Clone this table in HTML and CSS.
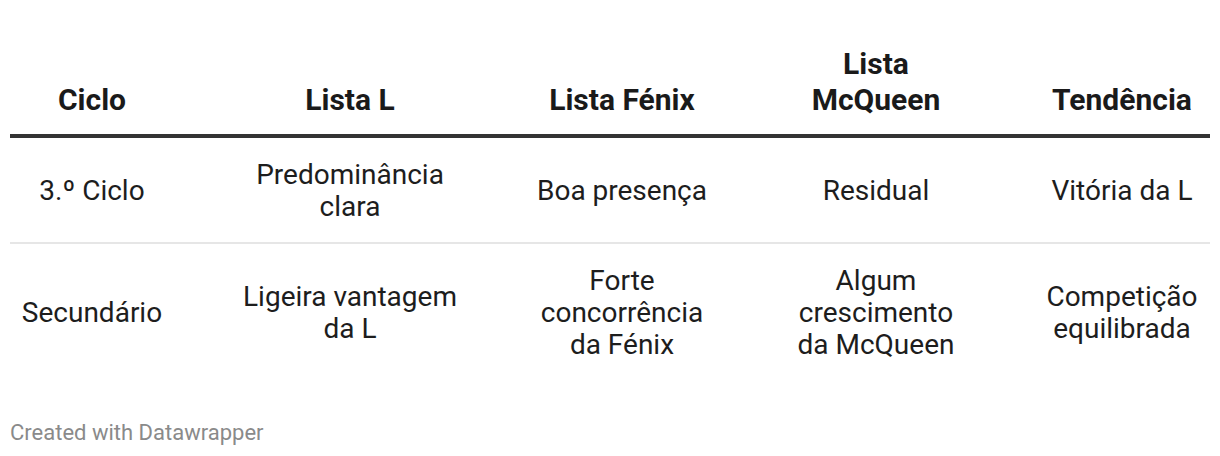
FILE: index.html
```html
<!DOCTYPE html>
<html>
<head>
<meta charset="utf-8">
<link rel="stylesheet" href="styles.css">
</head>
<body>
<div class="chart">
  <table class="dw-table">
    <thead>
      <tr>
        <th class="c1">Ciclo</th>
        <th class="c2">Lista L</th>
        <th class="c3">Lista Fénix</th>
        <th class="c4">Lista<br>McQueen</th>
        <th class="c5">Tendência</th>
      </tr>
    </thead>
    <tbody>
      <tr class="sep">
        <td>3.º Ciclo</td>
        <td>Predominância<br>clara</td>
        <td>Boa presença</td>
        <td>Residual</td>
        <td>Vitória da L</td>
      </tr>
      <tr>
        <td>Secundário</td>
        <td>Ligeira vantagem<br>da L</td>
        <td>Forte<br>concorrência<br>da Fénix</td>
        <td>Algum<br>crescimento<br>da McQueen</td>
        <td>Competição<br>equilibrada</td>
      </tr>
    </tbody>
  </table>
  <div class="footer">Created with Datawrapper</div>
</div>
</body>
</html>
```

FILE: styles.css
```css
html, body {
  margin: 0;
  padding: 0;
  background: #ffffff;
}
.chart {
  padding: 46px 10px 0 10px;
  font-family: Roboto, "Liberation Sans", sans-serif;
  color: #1d1d1d;
}
.dw-table {
  width: 100%;
  border-collapse: collapse;
  table-layout: fixed;
}
.dw-table th {
  font-size: 30px;
  font-weight: 700;
  line-height: 36px;
  vertical-align: bottom;
  text-align: center;
  padding: 0 0 16px 0;
  border-bottom: 4px solid #333333;
  color: #1a1a1a;
}
.dw-table td {
  font-size: 28px;
  font-weight: 400;
  line-height: 32px;
  text-align: center;
  vertical-align: middle;
  padding: 21px 0 19px 0;
}
.dw-table tr.sep td {
  border-bottom: 2px solid #e6e6e6;
}
.c1 { width: 164px; }
.c2 { width: 352px; }
.c3 { width: 192px; }
.c4 { width: 316px; }
.c5 { width: 176px; }
.footer {
  margin-top: 40px;
  font-size: 22px;
  color: #8a8a8a;
  line-height: 26px;
}
```
